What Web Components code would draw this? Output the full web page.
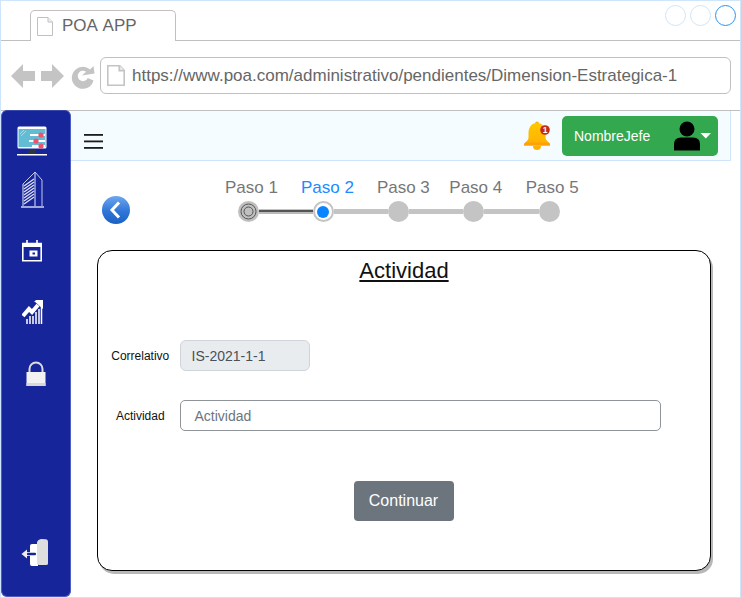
<!DOCTYPE html>
<html lang="es">
<head>
<meta charset="utf-8">
<title>POA APP</title>
<style>
html,body{margin:0;padding:0;background:#fff}
body{font-family:"Liberation Sans",Arial,sans-serif}
</style>
</head>
<body>
<poa-app>
  <browser-chrome slot="chrome" tab="POA APP" url="https://www.poa.com/administrativo/pendientes/Dimension-Estrategica-1"></browser-chrome>
  <side-nav slot="side"></side-nav>
  <top-bar slot="top" user="NombreJefe"></top-bar>
  <step-indicator slot="main"></step-indicator>
  <form-card slot="main" heading="Actividad">
    <field-row label="Correlativo" value="IS-2021-1-1" readonly></field-row>
    <field-row label="Actividad" placeholder="Actividad"></field-row>
    <action-button>Continuar</action-button>
  </form-card>
</poa-app>
<script>
function mk(name, html){
  customElements.define(name, class extends HTMLElement{
    constructor(){super();this.attachShadow({mode:'open'});}
    connectedCallback(){
      const get=(k)=>this.getAttribute(k)||'';
      this.shadowRoot.innerHTML=typeof html==='function'?html(get,this):html;
    }
  });
}
const pageIcon=(w,h,c,s)=>`<svg width="${w}" height="${h}" viewBox="0 0 16 19" fill="none"><path d="M.5.5H11L15.5 5V18.5H.5Z" fill="#fff" stroke="${c}" stroke-width="${s}"/><path d="M11 .5V5H15.5" stroke="${c}" stroke-width="${s}" fill="#f0f0f0"/></svg>`;

mk('poa-app',`<style>
:host{display:flex;flex-direction:column;box-sizing:border-box;width:741px;height:598px;border:1px solid #cfe5fb;overflow:hidden;background:#fff;font-family:"Liberation Sans",Arial,sans-serif}
.body{flex:1;display:flex;min-height:0}
.col{flex:none;width:660px;display:flex;flex-direction:column}
</style>
<slot name="chrome"></slot>
<div class="body"><slot name="side"></slot><div class="col"><slot name="top"></slot><slot name="main"></slot></div></div>`);

mk('browser-chrome',(g)=>`<style>
:host{display:block;flex:none}
.tabs{height:40px;box-sizing:border-box;border-bottom:1px solid #c0c0c0;display:flex;justify-content:space-between;padding:9px 4px 0 29px}
.tab{width:146px;height:31px;box-sizing:border-box;border:1px solid #c0c0c0;border-bottom:0;border-radius:5px 5px 0 0;background:#fff;display:flex;align-items:center;gap:9px;padding:0 0 0 6px;color:#666;font-size:17px;font-kerning:none;margin-bottom:-1px}
.tab svg{flex:none}
.dots{display:flex;gap:4px;margin-top:-5px}
.dots i{display:block;width:21px;height:21px;box-sizing:border-box;border:1px solid #cfe5fb;border-radius:50%}
.dots i:last-child{border-color:#2b93f0}
.nav{height:70px;box-sizing:border-box;border-bottom:1px solid #c0c0c0;display:flex;align-items:center;padding:0 9px 0 10px}
.nav svg.a{flex:none}
.url{margin-left:5px;flex:1;height:37px;box-sizing:border-box;border:1px solid #c0c0c0;border-radius:6px;display:flex;align-items:center;gap:7px;padding:0 0 0 6px;color:#666;font-size:17px;white-space:nowrap}
</style>
<div class="tabs"><div class="tab">${pageIcon(16,19,'#c0c0c0',1)}<span>${g('tab')}</span></div><div class="dots"><i></i><i></i><i></i></div></div>
<div class="nav">
<svg class="a" width="84" height="26" viewBox="0 0 84 26" fill="#c4c4c4"><path d="M0 13 12 1V8H24V18H12V25Z"/><path d="M53 13 41 1V8H30V18H41V25Z"/><path d="M83.500 10.500 82.500 3 79 6.500A11 11 0 1 0 82.500 17.500L76.800 15A5.200 5.200 0 1 1 75 8.700L71 12.500Z"/></svg>
<div class="url">${pageIcon(18,21,'#c4c4c4',1.6)}<span>${g('url')}</span></div>
</div>`);

mk('side-nav',`<style>
:host{display:flex;flex:none;flex-direction:column;align-items:flex-start;box-sizing:border-box;width:70px;height:487px;background:#17259b;border:1px solid #4d5cc0;border-top-color:#3a48ad;border-radius:6px;margin-top:-1px;padding-top:15px;padding-bottom:30px}
svg{display:block;flex:none}
.end{margin-top:auto;margin-left:19px}
</style>
<svg width="30" height="30" viewBox="0 0 30 30" style="margin-left:15px">
<rect x="0.500" y="0.500" width="29" height="22" rx="1.500" fill="#fff"/>
<rect x="1.500" y="3" width="27" height="18" fill="#62bcd4"/>
<path d="M3 8 7 4M4 10 9 5" stroke="#a8dbe8" stroke-width="1"/>
<path d="M13 9H28M12 15H28M15 20H28" stroke="#fff" stroke-width="2"/>
<circle cx="24" cy="9" r="2.600" fill="#f1516d"/><circle cx="19" cy="15" r="2.600" fill="#f1516d"/><circle cx="24" cy="20" r="2.600" fill="#f1516d"/>
<path d="M12 23H18L19 28H11Z" fill="#2c3540"/>
<rect x="0" y="28" width="30" height="1.500" fill="#fff"/>
</svg>
<svg width="24" height="38" viewBox="0 0 24 38" fill="none" stroke="#c3c8ec" stroke-width="1" style="margin-top:15px;margin-left:19px">
<path d="M2 13 14 1 21 9V35" />
<path d="M2 13V35M14 1V35" stroke-width="1.200"/>
<path d="M3 15 13 8M3 18 13 11M3 21 13 14M3 24 13 17M3 27 13 20M3 30 13 23M3 33 13 26" stroke="#dfe2f6" stroke-width="1.300"/>
<path d="M0 36H23" stroke-width="1.600"/>
</svg>
<svg width="20" height="22" viewBox="0 0 20 22" style="margin-top:31px;margin-left:20px">
<path d="M.8 3.500H19.200V20.700H.8Z" fill="none" stroke="#fff" stroke-width="1.600"/>
<path d="M1 4H19V7H1Z" fill="#fff"/>
<path d="M5 0V4M15 0V4" stroke="#fff" stroke-width="1.600"/>
<rect x="7.500" y="10.500" width="8" height="6" fill="#fff"/><rect x="10.500" y="12.500" width="2.500" height="2" fill="#17259b"/>
</svg>
<svg width="21" height="26" viewBox="0 0 21 26" style="margin-top:37px;margin-left:20px">
<path d="M1 17 7 10 10 13 16 6" fill="none" stroke="#fff" stroke-width="4"/>
<path d="M12 2H21V10L12 2Z" fill="#fff"/><path d="M13 1H21V9Z" fill="#fff"/>
<path d="M5 25V20M8 25V17M11 25V17M14 25V13M17 25V10M19.500 25V7" stroke="#fff" stroke-width="1.500"/>
</svg>
<svg width="20" height="25" viewBox="0 0 20 25" style="margin-top:36px;margin-left:24px">
<path d="M3.500 11V8A6.500 6.500 0 0 1 16.500 8V11" fill="none" stroke="#dcdcdc" stroke-width="2"/>
<rect x="0.500" y="11" width="19" height="14" fill="#f2f2f2"/>
<rect x="0.500" y="22" width="19" height="3" fill="#d8d8d8"/>
</svg>
<svg class="end" width="28" height="28" viewBox="0 0 28 28">
<path d="M9 8Q9 6 11 6H17V28H11Q9 28 9 26Z" fill="#fff"/>
<path d="M16 4Q17 1.500 20 1L25 1.300Q27 1.500 27 3.500V25.500Q27 27 25 27H18Q16 27 16 25Z" fill="#dedede"/>
<path d="M0.500 16 6 11.500V14H9V18H6V20.500Z" fill="#eee"/>
<rect x="6" y="14.800" width="9" height="2.400" rx="1" fill="#17259b"/>
</svg>`);

mk('top-bar',(g)=>`<style>
:host{display:flex;flex:none;align-items:center;box-sizing:border-box;height:50px;background:#f4fcff;border-right:1px solid #cfe5fb;border-bottom:1px solid #cfe5fb;padding-left:13px;padding-right:12px}
.burger{display:block;flex:none;margin-top:12px}
.bell{flex:none;margin-left:auto}
.user{flex:none;margin-left:10px;width:156px;height:40px;box-sizing:border-box;background:#34a84f;border-radius:5px;display:flex;align-items:center;color:#fff;font-size:14px;padding-left:12px}
.user span{flex:1}
.user svg{flex:none}
</style>
<svg class="burger" width="19" height="15" viewBox="0 0 19 15" fill="#1c1c1c"><rect width="19" height="1.800"/><rect y="6.500" width="19" height="1.800"/><rect y="13" width="19" height="1.800"/></svg>
<svg class="bell" width="29" height="29" viewBox="0 0 29 29">
<defs><linearGradient id="b" x1="0" y1="0" x2="0" y2="1"><stop offset="0" stop-color="#ffc800"/><stop offset="1" stop-color="#ffb000"/></linearGradient></defs>
<circle cx="14" cy="2.500" r="2" fill="#ffb300"/>
<path d="M14 2C8 2 5.500 7 5.500 12V17C5.500 19 2.500 21 1 23V24.500H27V23C25.500 21 22.500 19 22.500 17V12C22.500 7 20 2 14 2Z" fill="url(#b)"/>
<path d="M1 23V24.500H27V23C26.600 22.500 26 22 25.500 21.500H2.500C2 22 1.400 22.500 1 23Z" fill="#ff9f0a"/>
<path d="M10 25H18A4 4 0 0 1 10 25Z" fill="#ffb300"/>
<circle cx="22" cy="9" r="4.800" fill="#c62a12"/>
<text x="22" y="12" text-anchor="middle" font-family="Liberation Sans" font-size="8.500" font-weight="700" fill="#fff">1</text>
</svg>
<div class="user"><span>${g('user')}</span>
<svg width="39" height="30" viewBox="0 0 39 30" style="margin-right:6px">
<circle cx="14" cy="8" r="7.500" fill="#000"/>
<path d="M1 29.500V23Q1 16.500 8 16.500H20Q27 16.500 27 23V29.500Z" fill="#000"/>
<path d="M27.500 12H38L32.800 17.500Z" fill="#fff"/>
</svg></div>`);

mk('step-indicator',`<style>
:host{display:flex;flex:none;box-sizing:border-box;height:89px;padding:18px 0 0 31px;font-family:"Liberation Sans",Arial,sans-serif}
.back{flex:none;margin-top:17px}
.steps{flex:none}
.labels{display:flex;height:22px;padding-left:95px;font-size:17px;line-height:18px;color:#777;white-space:nowrap;font-kerning:none}
.labels span+span{margin-left:23px}
.labels .on{color:#1a8cff}
.track{display:flex;align-items:center;padding-left:107.500px}
.d{flex:none;width:21px;height:21px;border-radius:50%;background:#c4c4c4;box-sizing:border-box}
.l{flex:none;width:54.250px;height:5px;background:#c4c4c4}
.l.done{background:linear-gradient(#c4c4c4 0 1px,#555 1px 3px,#bbb 3px)}
.done-d{display:flex;align-items:center;justify-content:center;background:#c0c0c0}
.cur{display:flex;align-items:center;justify-content:center;background:#fff;border:2.500px solid #c4c4c4}
.cur::after{content:"";width:12px;height:12px;border-radius:50%;background:#0a84ff}
</style>
<svg class="back" width="28" height="28" viewBox="0 0 28 28">
<defs><linearGradient id="g" x1="0" y1="0" x2="0" y2="1"><stop offset="0" stop-color="#6ea6ee"/><stop offset=".55" stop-color="#2f76d8"/><stop offset="1" stop-color="#1c60c4"/></linearGradient></defs>
<circle cx="14" cy="14" r="14" fill="url(#g)"/>
<path d="M17 6.500 10 14 17 21.500" fill="none" stroke="#fff" stroke-width="3"/>
</svg>
<div class="steps">
<div class="labels"><span>Paso 1</span><span class="on">Paso 2</span><span>Paso 3</span><span style="margin-left:19.500px">Paso 4</span><span style="margin-left:23.500px">Paso 5</span></div>
<div class="track">
<div class="d done-d"><svg width="21" height="21" viewBox="0 0 21 21" fill="none" stroke="#555"><circle cx="10.500" cy="10.500" r="7.500"/><circle cx="10.500" cy="10.500" r="4.500"/></svg></div>
<div class="l done"></div><div class="d cur"></div><div class="l"></div><div class="d"></div><div class="l"></div><div class="d"></div><div class="l"></div><div class="d"></div>
</div>
</div>`);

mk('form-card',(g)=>`<style>
:host{display:block;flex:none;box-sizing:border-box;width:614px;height:321px;margin-left:26px;border:1.500px solid #000;border-radius:15px;box-shadow:2px 3px 0 #b8b8b8;background:#fff;font-family:"Liberation Sans",Arial,sans-serif;color:#111}
h2{margin:0;height:89px;padding-top:6px;box-sizing:border-box;text-align:center;font-size:22px;line-height:27px;font-weight:400;text-decoration:underline}
.inner{display:flex;flex-direction:column;align-items:flex-start}
</style>
<h2>${g('heading')}</h2>
<div class="inner"><slot></slot></div>`);

mk('field-row',(g,el)=>{
 const ro=el.hasAttribute('readonly');
 return `<style>
:host{display:flex;align-items:center;height:31px;margin-bottom:29px;font-family:"Liberation Sans",Arial,sans-serif}
label{flex:none;width:81.500px;text-align:center;font-size:12px;color:#111;box-sizing:border-box;padding-left:3px}
.f{flex:none;box-sizing:border-box;height:31px;display:flex;align-items:center;font-size:14px;border-radius:5px}
.ro{width:130px;background:#e9ecef;border:1px solid #ced4da;color:#495057;padding-left:11px;border-radius:6px}
.ph{width:481px;background:#fff;border:1px solid #8f9498;color:#6c757d;padding-left:14px}
</style>
<label>${g('label')}</label>
${ro?`<div class="f ro">${g('value')}</div>`:`<div class="f ph">${g('placeholder')}</div>`}`;
});

mk('action-button',`<style>
:host{display:flex;align-items:center;justify-content:center;box-sizing:border-box;width:100px;height:40px;margin:21px 0 0 255.500px;background:#6c757d;border-radius:4px;color:#fff;font:16px "Liberation Sans",Arial,sans-serif}
</style><slot></slot>`);
</script>
</body>
</html>
